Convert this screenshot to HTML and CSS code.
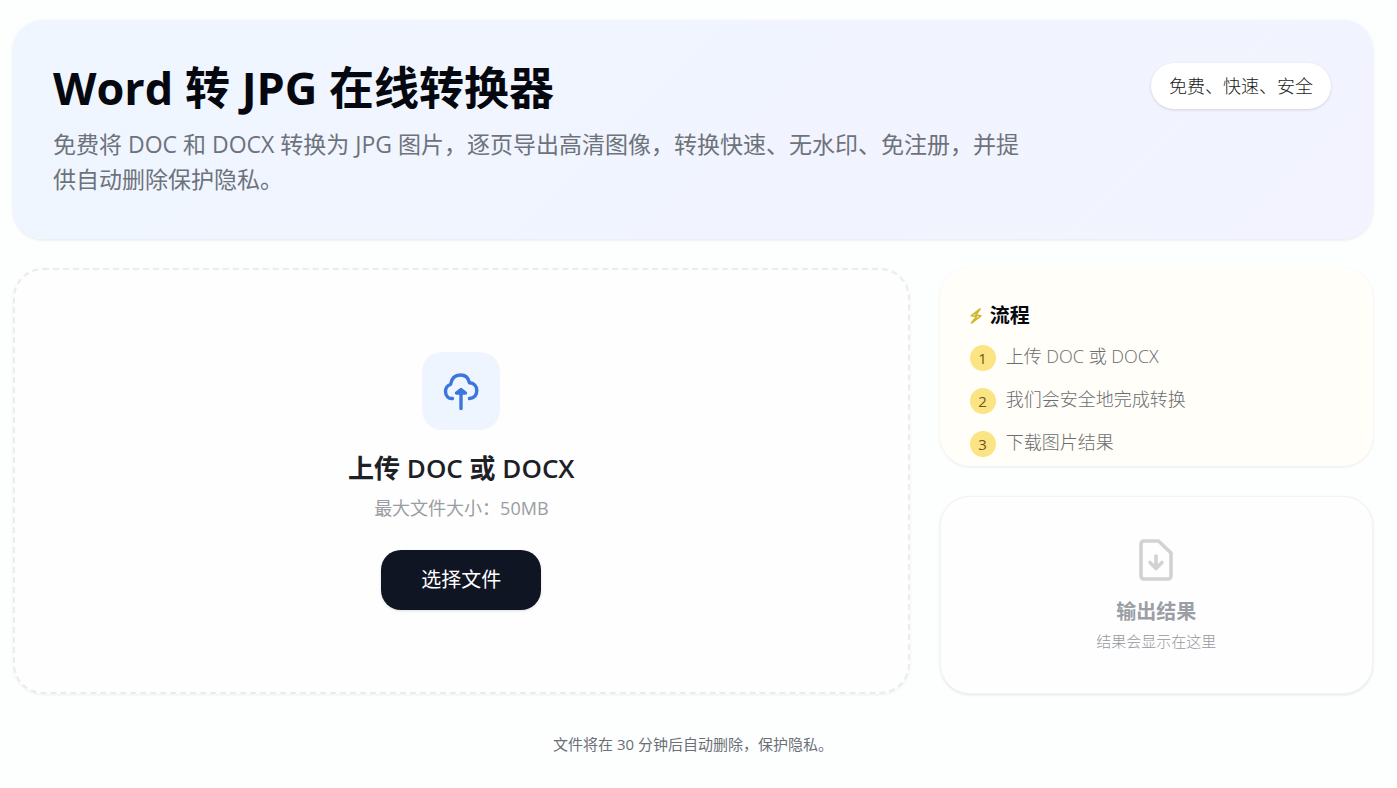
FILE: index.html
```html
<!DOCTYPE html>
<html lang="zh-CN">
<head>
<meta charset="utf-8">
<meta name="viewport" content="width=device-width, initial-scale=1">
<title>Word 转 JPG 在线转换器</title>
<link rel="stylesheet" href="styles.css">
</head>
<body>
<main class="page">
  <header class="hero">
    <div class="hero-copy">
      <h1 class="hero-title">Word 转 JPG 在线转换器</h1>
      <p class="hero-text">免费将 DOC 和 DOCX 转换为 JPG 图片，逐页导出高清图像，转换快速、无水印、免注册，并提供自动删除保护隐私。</p>
    </div>
    <span class="pill">免费、快速、安全</span>
  </header>

  <div class="grid">
    <section class="card upload">
      <div class="upload-icon">
        <svg width="40" height="40" viewBox="0 0 40 40" fill="none" stroke="currentColor" stroke-width="3.4" stroke-linecap="round" stroke-linejoin="round" aria-hidden="true">
          <path d="M11.500 27.500C7.500 28 4.500 25 4.500 20.500C4.500 17 6.500 14.500 9.500 13.500C10.500 7.500 14 4 19.500 4C24.500 4 27.500 7 28.500 11.800C33 12 35.800 15.500 35.800 19.500C35.800 24 33 27 28.500 27.500"/>
          <path d="M20 37.500V20"/>
          <path d="M15.500 22L20 18.500L24.500 22Z" fill="currentColor"/>
        </svg>
      </div>
      <h2 class="upload-title">上传 DOC 或 DOCX</h2>
      <p class="upload-hint">最大文件大小：50MB</p>
      <button class="button" type="button">选择文件</button>
    </section>

    <section class="card steps">
      <h2 class="steps-title">
        <svg class="bolt" width="12" height="16" viewBox="0 0 12 16" fill="none" stroke="currentColor" stroke-width="1.600" stroke-linejoin="round" aria-hidden="true">
          <path d="M10 1L1.200 7.800L6.500 8.500L1.500 15L10.800 7.800L5.800 7Z"/>
        </svg>
        流程
      </h2>
      <ol class="steps-list">
        <li class="step"><span class="badge">1</span><span>上传 DOC 或 DOCX</span></li>
        <li class="step"><span class="badge">2</span><span>我们会安全地完成转换</span></li>
        <li class="step"><span class="badge">3</span><span>下载图片结果</span></li>
      </ol>
    </section>

    <section class="card result">
      <svg class="result-icon" width="34" height="42" viewBox="0 0 34 42" fill="none" stroke="currentColor" stroke-width="3.6" stroke-linecap="round" stroke-linejoin="round" aria-hidden="true">
        <path d="M5 2H19.500L32 14V37A3 3 0 0 1 29 40H5A3 3 0 0 1 2 37V5A3 3 0 0 1 5 2Z"/>
        <path d="M17 17V28.500M11 23.500L17 29.500L23 23.500"/>
      </svg>
      <h2 class="result-title">输出结果</h2>
      <p class="result-text">结果会显示在这里</p>
    </section>
  </div>

  <footer class="footer">文件将在 30 分钟后自动删除，保护隐私。</footer>
</main>
</body>
</html>
```
FILE: styles.css
```css
* {
  box-sizing: border-box;
}

body {
  margin: 0;
  background: #fdfefe;
  color: #05080e;
  font-family: "Open Sans", "Noto Sans CJK SC", sans-serif;
}

h1,
h2,
p,
ol {
  margin: 0;
  padding: 0;
}

.page {
  padding: 20px 24px 20px 13px;
}

.hero {
  display: flex;
  justify-content: space-between;
  align-items: flex-start;
  gap: 40px;
  padding: 43px 42px 42px 40px;
  border-radius: 30px;
  background: linear-gradient(135deg, #eff6ff, #f1f4fe 60%, #f2f3fe);
  box-shadow: 0 1px 3px rgba(0, 0, 0, 0.1);
}

.hero-copy {
  max-width: 968px;
}

.hero-title {
  font-size: 45px;
  line-height: 50px;
  font-weight: 700;
}

.hero-text {
  margin-top: 14px;
  color: #6d727b;
  font-size: 23px;
  line-height: 35px;
}

.pill {
  flex-shrink: 0;
  padding: 8px 18px;
  border-radius: 24px;
  background: #fff;
  box-shadow: 0 1px 3px rgba(0, 0, 0, 0.14);
  color: #171a20;
  font-size: 18px;
  line-height: 30px;
  font-weight: 300;
}

.grid {
  display: grid;
  grid-template-columns: repeat(3, 1fr);
  grid-auto-rows: 1fr;
  gap: 30px;
  margin-top: 29px;
}

.card {
  border-radius: 30px;
  background: #fefefe;
}

.upload {
  grid-column: span 2;
  grid-row: span 2;
  display: flex;
  flex-direction: column;
  align-items: center;
  justify-content: center;
  border: 2px dashed #ebeced;
  box-shadow: 0 1px 3px rgba(0, 0, 0, 0.06);
}

.upload-icon {
  display: grid;
  place-items: center;
  width: 78px;
  height: 78px;
  border-radius: 20px;
  background: #eff5ff;
  color: #3b76dc;
}

.upload-title {
  margin-top: 20px;
  color: #1d2025;
  font-size: 26px;
  line-height: 36px;
  font-weight: 600;
}

.upload-hint {
  margin-top: 8px;
  color: #999da3;
  font-size: 18px;
  line-height: 28px;
}

.button {
  margin-top: 28px;
  padding: 15px 40px;
  border: 0;
  border-radius: 20px;
  background: #0f1522;
  box-shadow: 0 1px 3px rgba(0, 0, 0, 0.12);
  color: #fff;
  font: inherit;
  font-size: 20px;
  line-height: 30px;
  cursor: pointer;
}

.steps {
  padding: 33px 30px 9px;
  background: #fffef8;
  box-shadow: 0 1px 3px rgba(0, 0, 0, 0.08);
}

.steps-title {
  display: flex;
  align-items: center;
  gap: 8px;
  font-size: 20px;
  line-height: 30px;
  font-weight: 700;
}

.bolt {
  color: #d0b62c;
}

.steps-list {
  display: grid;
  gap: 14px;
  margin-top: 11px;
  list-style: none;
}

.step {
  display: flex;
  align-items: flex-start;
  gap: 10px;
  color: #6b6d70;
  font-size: 18px;
  line-height: 28px;
  font-weight: 300;
}

.badge {
  width: 26px;
  height: 26px;
  margin-top: 3px;
  border-radius: 50%;
  background: #fbe484;
  color: #73521b;
  font-size: 15px;
  line-height: 26px;
  font-weight: 400;
  text-align: center;
}

.result {
  display: flex;
  flex-direction: column;
  align-items: center;
  justify-content: center;
  border: 1px solid #f3f4f5;
  box-shadow: 0 1px 3px rgba(0, 0, 0, 0.1);
}

.result-icon {
  color: #d0d2d4;
}

.result-title {
  margin-top: 16px;
  color: #9b9fa5;
  font-size: 20px;
  line-height: 30px;
  font-weight: 700;
}

.result-text {
  margin-top: 4px;
  color: #94989f;
  font-size: 15px;
  line-height: 20px;
  font-weight: 300;
}

.footer {
  margin-top: 38px;
  color: #6b6f76;
  font-size: 15px;
  line-height: 24px;
  text-align: center;
}
```
